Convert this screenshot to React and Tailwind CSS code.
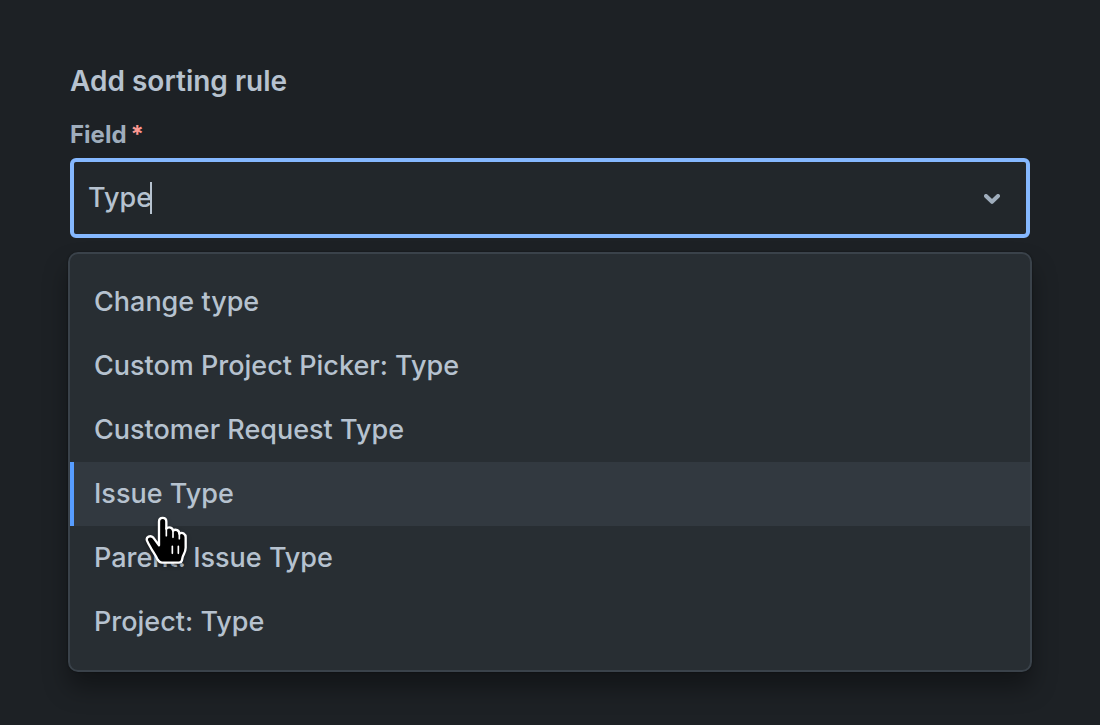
import { useState } from "react";

const OPTIONS = [
  "Change type",
  "Custom Project Picker: Type",
  "Customer Request Type",
  "Issue Type",
  "Parent: Issue Type",
  "Project: Type",
];

function Chevron() {
  return (
    <svg viewBox="0 0 16 10" className="mt-0.5 h-2.5 w-4" fill="none" aria-hidden="true">
      <path d="M2 2 L8 7.8 L14 2" stroke="#9fadbc" strokeWidth="4" strokeLinecap="round" strokeLinejoin="round" />
    </svg>
  );
}

function PointerHand() {
  return (
    <svg
      viewBox="45 48 126 150"
      className="pointer-events-none absolute top-[54px] left-[71px] z-10 h-[50px] w-[42px] drop-shadow-[0_2px_2px_rgba(0,0,0,0.4)]"
      aria-hidden="true"
    >
      <path
        d="M87 136 V65 C87 50 109 50 109 65 V86 C116 79 128 83 129 92 C137 86 148 91 148 101 C157 95 167 102 167 112 V143 C167 156 160 163 158 171 L156 180 C155 185 152 188 147 188 H96 C90 188 86 184 83 179 C77 166 71 158 65 148 C60 139 55 132 51 122 C47 111 61 104 70 113 Z"
        fill="#000"
        stroke="#fff"
        strokeWidth="7"
        strokeLinejoin="round"
      />
      <path d="M109 84 V107 M129 91 V112 M148 100 V116" stroke="#fff" strokeWidth="5" strokeLinecap="round" />
      <path d="M127 139 V160 M145 139 V160" stroke="#fff" strokeWidth="5" strokeLinecap="round" />
    </svg>
  );
}

export default function App() {
  const [query, setQuery] = useState("Type");
  const [active, setActive] = useState("Issue Type");

  return (
    <main className="min-h-screen bg-[#1d2125] px-[68px] pt-[63px] pb-12 font-['Inter','Liberation_Sans',sans-serif] text-[#b6c2cf]">
      <div className="px-0.5">
        <h1 className="text-[28px] leading-9 font-semibold">Add sorting rule</h1>
        <label htmlFor="field" className="mt-[18px] flex gap-1 text-2xl leading-9 font-bold text-[#9fadbc]">
          Field
          <span className="text-[#fd9891]">*</span>
        </label>
        <div className="mt-[5px] flex h-20 items-center justify-between rounded-md border-4 border-[#85b8ff] bg-[#22272b] pr-[26px] pl-3.5">
          <div className="flex items-center">
            <input
              id="field"
              role="combobox"
              aria-expanded="true"
              aria-controls="field-options"
              autoComplete="off"
              value={query}
              onChange={(e) => setQuery(e.target.value)}
              className="[field-sizing:content] bg-transparent text-[27px] leading-9 font-medium caret-transparent outline-none"
            />
            <span className="-ml-0.5 h-8 w-0.5 bg-[#b6c2cf]" />
          </div>
          <Chevron />
        </div>
      </div>
      <ul
        id="field-options"
        role="listbox"
        aria-label="Field"
        className="mt-3.5 rounded-[10px] border-2 border-[#3a424a] bg-[#282e33] py-4 shadow-[0_16px_24px_rgba(3,4,4,0.36),0_0_2px_rgba(3,4,4,0.5)]"
      >
        {OPTIONS.map((option) => (
          <li
            key={option}
            role="option"
            aria-selected={option === active}
            onClick={() => setActive(option)}
            className={
              option === active
                ? "relative flex h-16 items-center border-l-4 border-[#579dff] bg-[#323940] pl-5 text-[27px] leading-9 font-medium"
                : "flex h-16 items-center border-l-4 border-transparent pl-5 text-[27px] leading-9 font-medium"
            }
          >
            {option}
            {option === active && <PointerHand />}
          </li>
        ))}
      </ul>
    </main>
  );
}
